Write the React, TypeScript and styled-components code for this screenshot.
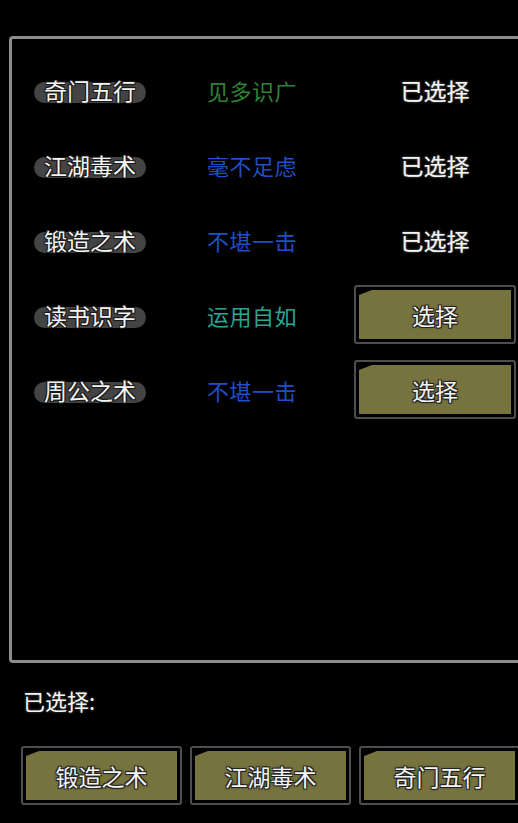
import styled, { createGlobalStyle, css } from "styled-components";

const GlobalStyle = createGlobalStyle`
  html, body {
    margin: 0;
    padding: 0;
    background: #000;
  }
  body {
    width: 518px;
    height: 823px;
    overflow: hidden;
    font-family: "Noto Sans CJK SC", "Noto Sans", sans-serif;
  }
`;

const outlined = css`
  color: #f4f4f4;
  font-weight: 400;
  text-shadow:
    -1px -1px 0 #1a1a1a,
    1px -1px 0 #1a1a1a,
    -1px 1px 0 #1a1a1a,
    1px 1px 0 #1a1a1a,
    0 0 2px #000;
`;

const Screen = styled.div`
  display: flex;
  flex-direction: column;
  width: 518px;
  height: 823px;
  overflow: hidden;
  padding-top: 36px;
  box-sizing: border-box;
`;

const Panel = styled.div`
  margin-left: 9px;
  height: 627px;
  box-sizing: border-box;
  border: 3px solid #8c8c8c;
  border-right: none;
  border-radius: 4px 0 0 4px;
  padding-top: 13px;
`;

const Row = styled.div`
  display: grid;
  grid-template-columns: 173px 147px 162px;
  align-items: center;
  height: 75px;
  padding-left: 22px;
`;

const NamePill = styled.span`
  position: relative;
  isolation: isolate;
  justify-self: start;
  padding: 0 10px;
  font-size: 23px;
  line-height: 30px;
  ${outlined};

  &::before {
    content: "";
    position: absolute;
    left: 0;
    right: 0;
    top: 7px;
    height: 21px;
    border-radius: 11px;
    background: #444;
    z-index: -1;
  }
`;

const Level = styled.span<{ $tone: string }>`
  font-size: 22px;
  color: ${(p) => p.$tone};
  letter-spacing: 0.5px;
`;

const Chosen = styled.span`
  justify-self: center;
  font-size: 23px;
  ${outlined};
  text-shadow: 0 0 3px #555, 0 0 1px #999;
`;

const BtnFrame = styled.button<{ $w: number }>`
  flex: none;
  width: ${(p) => p.$w}px;
  height: 59px;
  padding: 3px;
  border: 2px solid #4e4e4e;
  border-radius: 3px;
  background: #000;
  font-family: inherit;
  cursor: pointer;
  display: flex;
`;

const BtnFace = styled.span`
  flex: 1;
  display: flex;
  align-items: center;
  justify-content: center;
  background: #76733f;
  clip-path: polygon(13px 0, 100% 0, 100% 100%, 0 100%, 0 5px);
  font-size: 23px;
  ${outlined};
  text-shadow:
    -1px -1px 0 #222,
    1px -1px 0 #222,
    -1px 1px 0 #222,
    1px 1px 0 #222,
    0 0 3px #222;
`;

const Caption = styled.div`
  margin-top: 22px;
  padding-left: 23px;
  font-size: 22px;
  line-height: 30px;
  ${outlined};
  text-shadow: 0 0 3px #555;
`;

const Tray = styled.div`
  display: flex;
  gap: 8px;
  margin-top: 31px;
  padding-left: 21px;
`;

type Skill = { name: string; level: string; tone: string; picked: boolean };

const skills: Skill[] = [
  { name: "奇门五行", level: "见多识广", tone: "#2e8434", picked: true },
  { name: "江湖毒术", level: "毫不足虑", tone: "#1f4fc4", picked: true },
  { name: "锻造之术", level: "不堪一击", tone: "#1f4fc4", picked: true },
  { name: "读书识字", level: "运用自如", tone: "#2aa595", picked: false },
  { name: "周公之术", level: "不堪一击", tone: "#1f4fc4", picked: false },
];

const picked = ["锻造之术", "江湖毒术", "奇门五行"];

export default function App() {
  return (
    <>
      <GlobalStyle />
      <Screen>
        <Panel>
          {skills.map((s) => (
            <Row key={s.name}>
              <NamePill>{s.name}</NamePill>
              <Level $tone={s.tone}>{s.level}</Level>
              {s.picked ? (
                <Chosen>已选择</Chosen>
              ) : (
                <BtnFrame $w={162}>
                  <BtnFace>选择</BtnFace>
                </BtnFrame>
              )}
            </Row>
          ))}
        </Panel>
        <Caption>已选择:</Caption>
        <Tray>
          {picked.map((p) => (
            <BtnFrame key={p} $w={161}>
              <BtnFace>{p}</BtnFace>
            </BtnFrame>
          ))}
        </Tray>
      </Screen>
    </>
  );
}
